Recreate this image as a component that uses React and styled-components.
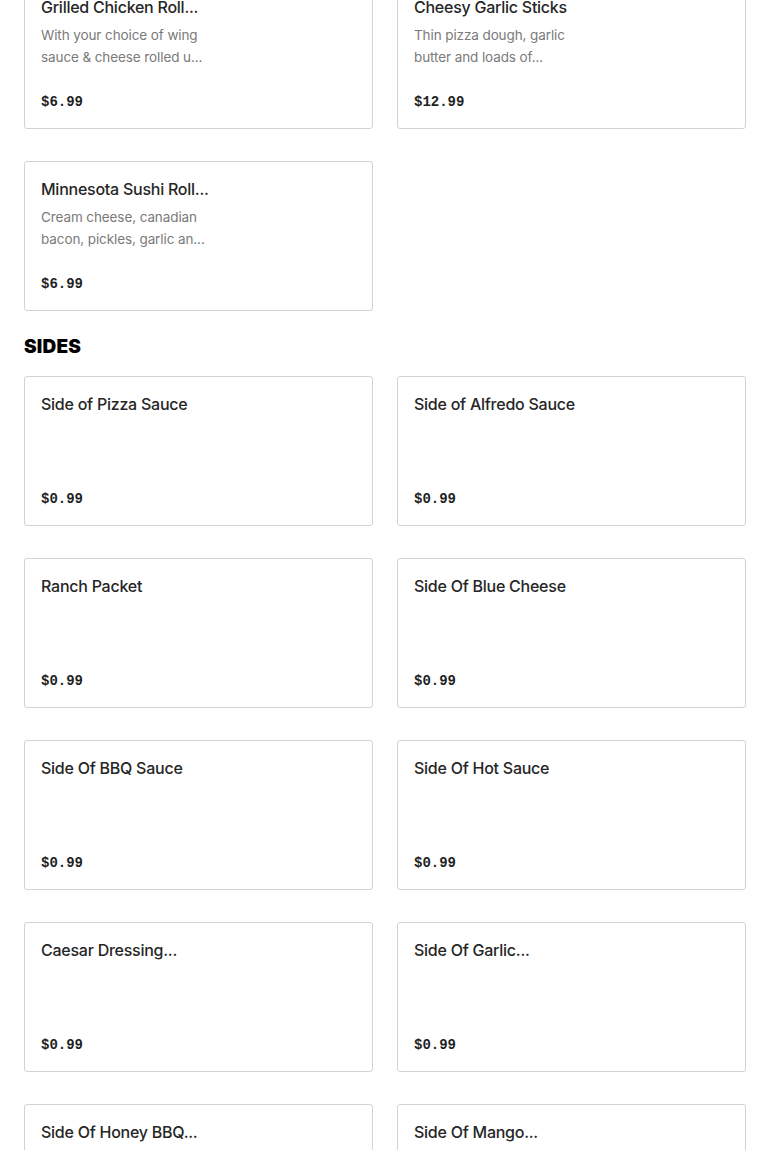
import React from "react";
import styled, { createGlobalStyle } from "styled-components";

const GlobalStyle = createGlobalStyle`
  body {
    margin: 0;
    background: #fff;
    font-family: Inter, "Noto Sans", sans-serif;
  }
`;

const combos = [
  {
    name: "Grilled Chicken Roll...",
    desc: "With your choice of wing sauce & cheese rolled u...",
    price: "$6.99",
  },
  {
    name: "Cheesy Garlic Sticks",
    desc: "Thin pizza dough, garlic butter and loads of...",
    price: "$12.99",
  },
  {
    name: "Minnesota Sushi Roll...",
    desc: "Cream cheese, canadian bacon, pickles, garlic an...",
    price: "$6.99",
  },
];

const sides = [
  "Side of Pizza Sauce",
  "Side of Alfredo Sauce",
  "Ranch Packet",
  "Side Of Blue Cheese",
  "Side Of BBQ Sauce",
  "Side Of Hot Sauce",
  "Caesar Dressing...",
  "Side Of Garlic...",
  "Side Of Honey BBQ...",
  "Side Of Mango...",
];

function Item({ name, desc, price }) {
  return (
    <Card>
      <Title>{name}</Title>
      {desc && <Desc>{desc}</Desc>}
      <Price>{price}</Price>
    </Card>
  );
}

function App() {
  return (
    <Page>
      <GlobalStyle />
      <Grid>
        {combos.map((c) => (
          <Item key={c.name} {...c} />
        ))}
      </Grid>
      <Heading>SIDES</Heading>
      <Grid>
        {sides.map((s) => (
          <Item key={s} name={s} price="$0.99" />
        ))}
      </Grid>
    </Page>
  );
}

const Page = styled.div`
  padding: 0 24px;
  margin-top: -21px;
`;

const Grid = styled.div`
  display: grid;
  grid-template-columns: 1fr 1fr;
  column-gap: 24px;
  row-gap: 32px;
`;

const Card = styled.div`
  display: flex;
  flex-direction: column;
  box-sizing: border-box;
  min-height: 150px;
  padding: 16px;
  border: 1px solid #d3d3d3;
  border-radius: 3px;
  background: #fff;
`;

const Title = styled.div`
  font-size: 16px;
  font-weight: 500;
  line-height: 22px;
  color: #262626;
  letter-spacing: -0.25px;
`;

const Desc = styled.div`
  margin-top: 6px;
  max-width: 178px;
  font-size: 13.5px;
  line-height: 22px;
  color: #7a7a7a;
  letter-spacing: -0.1px;
`;

const Price = styled.div`
  margin-top: auto;
  font-family: "Liberation Mono", monospace;
  font-weight: 700;
  font-size: 14px;
  line-height: 20px;
  color: #1f1f1f;
`;

const Heading = styled.h2`
  margin: 24px 0 17px;
  font-size: 19px;
  font-weight: 900;
  line-height: 24px;
  color: #000;
  letter-spacing: 0.2px;
`;

export default App;
